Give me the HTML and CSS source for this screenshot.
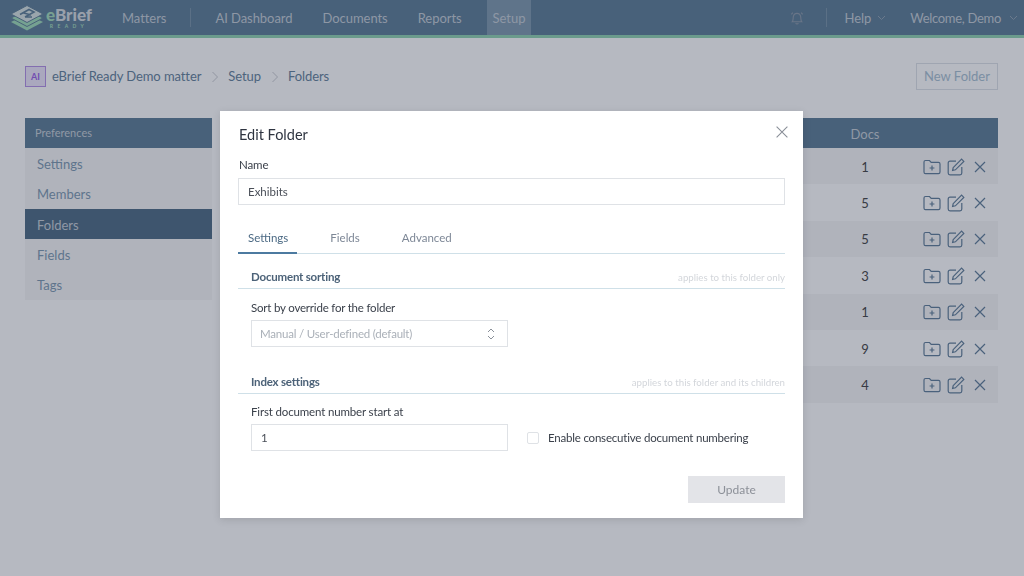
FILE: index.html
```html
<!DOCTYPE html>
<html lang="en">
<head>
  <meta charset="UTF-8">
  <title>Edit Folder</title>
  <link rel="stylesheet" href="styles.css">
</head>
<body>

<header class="topbar">
  <div class="logo">
    <svg width="34" height="26" viewBox="0 0 34 26">
      <path d="M1 17 L17 9 L33 17 L17 25.5 Z" fill="#9fdcb8"/>
      <path d="M1 13 L17 5 L33 13 L17 21.5 Z" fill="#9fdcb8" stroke="#5c7c95" stroke-width="1"/>
      <path d="M1 9 L17 .5 L33 9 L17 17.5 Z" fill="#d5e2e0" stroke="#5c7c95" stroke-width="1"/>
      <path d="M10 9.5 L19 4.5 L24 7 L15 12 M13 7.8 L21 10 M15 12 L22 12" stroke="#5c7c95" stroke-width="1.6" fill="none"/>
    </svg>
    <div class="logo-text">
      <div class="logo-name"><span class="logo-e">e</span>Brief</div>
      <div class="logo-ready">READY</div>
    </div>
  </div>
  <nav class="nav">
    <a class="nav-link">Matters</a>
    <span class="nav-sep"></span>
    <a class="nav-link">AI Dashboard</a>
    <a class="nav-link">Documents</a>
    <a class="nav-link">Reports</a>
    <a class="nav-link nav-active">Setup</a>
  </nav>
  <div class="nav-right">
    <svg class="bell" width="16" height="16" viewBox="0 0 16 16" fill="none" stroke="#8c9aaa" stroke-width="1.1">
      <path d="M3.2 11.8 C4.4 10.4 4 8.6 4.3 6.8 C4.6 4.8 6 3.4 8 3.4 C10 3.4 11.4 4.8 11.7 6.8 C12 8.6 11.6 10.4 12.8 11.8 Z"/>
      <path d="M6.6 13.2 C7.2 14.2 8.8 14.2 9.4 13.2"/>
      <path d="M2.4 4.4 L3.8 2.6 M13.6 4.4 L12.2 2.6"/>
    </svg>
    <span class="nav-sep"></span>
    <a class="nav-link nav-drop">Help <svg class="chev" width="9" height="6" viewBox="0 0 9 6"><path d="M1 1 L4.5 4.5 L8 1" fill="none" stroke="#8fa1b2" stroke-width="1"/></svg></a>
    <a class="nav-link nav-drop nav-user">Welcome, Demo <svg class="chev" width="9" height="6" viewBox="0 0 9 6"><path d="M1 1 L4.5 4.5 L8 1" fill="none" stroke="#8fa1b2" stroke-width="1"/></svg></a>
  </div>
</header>

<main class="page">
  <div class="crumbs">
    <span class="matter-badge">AI</span>
    <span class="crumb">eBrief Ready Demo matter</span>
    <svg class="crumb-sep" width="8" height="12" viewBox="0 0 8 12"><path d="M1.5 1 L6.5 6 L1.5 11" fill="none" stroke="#c9ccd2" stroke-width="1"/></svg>
    <span class="crumb">Setup</span>
    <svg class="crumb-sep" width="8" height="12" viewBox="0 0 8 12"><path d="M1.5 1 L6.5 6 L1.5 11" fill="none" stroke="#c9ccd2" stroke-width="1"/></svg>
    <span class="crumb">Folders</span>
    <button class="btn-new">New Folder</button>
  </div>

  <div class="columns">
    <aside class="side">
      <div class="side-head">Preferences</div>
      <a class="side-item">Settings</a>
      <a class="side-item">Members</a>
      <a class="side-item side-active">Folders</a>
      <a class="side-item">Fields</a>
      <a class="side-item">Tags</a>
    </aside>

    <section class="table">
      <div class="row row-head"><span class="docs">Docs</span><span class="acts"></span></div>
      <div class="row"><span class="docs">1</span><span class="acts" data-acts></span></div>
      <div class="row"><span class="docs">5</span><span class="acts" data-acts></span></div>
      <div class="row"><span class="docs">5</span><span class="acts" data-acts></span></div>
      <div class="row"><span class="docs">3</span><span class="acts" data-acts></span></div>
      <div class="row"><span class="docs">1</span><span class="acts" data-acts></span></div>
      <div class="row"><span class="docs">9</span><span class="acts" data-acts></span></div>
      <div class="row"><span class="docs">4</span><span class="acts" data-acts></span></div>
    </section>
  </div>
</main>

<template id="actIcons">
  <svg width="18" height="16" viewBox="0 0 18 16" fill="none" stroke="#5f7d98" stroke-width="1.2">
    <path d="M1 3 C1 2 1.5 1.5 2.5 1.5 H6.5 L8.2 3.4 H15.5 C16.5 3.4 17 4 17 5 V13 C17 14 16.5 14.6 15.5 14.6 H2.5 C1.5 14.6 1 14 1 13 Z"/>
    <path d="M9 6.6 V11.4 M6.6 9 H11.4"/>
  </svg>
  <svg width="18" height="18" viewBox="0 0 18 18" fill="none" stroke="#5f7d98" stroke-width="1.2">
    <path d="M9 3.2 H3 C2 3.2 1.2 4 1.2 5 V15 C1.2 16 2 16.8 3 16.8 H13 C14 16.8 14.8 16 14.8 15 V9"/>
    <path d="M6.2 9.6 L14.6 1.2 L16.8 3.4 L8.4 11.8 L5.6 12.4 Z"/>
  </svg>
  <svg class="act-x" width="12" height="12" viewBox="0 0 12 12" fill="none" stroke="#5f7d98" stroke-width="1.2">
    <path d="M1 1 L11 11 M11 1 L1 11"/>
  </svg>
</template>

<div class="overlay">
  <div class="modal">
    <svg class="modal-close" width="12" height="12" viewBox="0 0 12 12" fill="none" stroke="#8a8f98" stroke-width="1.1">
      <path d="M.6 .6 L11.4 11.4 M11.4 .6 L.6 11.4"/>
    </svg>
    <h2 class="modal-title">Edit Folder</h2>
    <label class="label">Name</label>
    <div class="input input-name">Exhibits</div>

    <div class="tabs">
      <span class="tab tab-active">Settings</span>
      <span class="tab">Fields</span>
      <span class="tab">Advanced</span>
    </div>

    <div class="group">
      <div class="group-head"><span class="group-title">Document sorting</span><span class="group-note">applies to this folder only</span></div>
      <label class="label label-inner">Sort by override for the folder</label>
      <div class="input input-half input-select">
        Manual / User-defined (default)
        <svg width="8" height="12" viewBox="0 0 8 12" fill="none" stroke="#8a9099" stroke-width="1"><path d="M1 4 L4 1 L7 4 M1 8 L4 11 L7 8"/></svg>
      </div>
    </div>

    <div class="group group-second">
      <div class="group-head"><span class="group-title">Index settings</span><span class="group-note">applies to this folder and its children</span></div>
      <label class="label label-first">First document number start at</label>
      <div class="field-row">
        <div class="input input-half">1</div>
        <label class="check"><span class="check-box"></span>Enable consecutive document numbering</label>
      </div>
    </div>

    <div class="modal-foot"><button class="btn-update">Update</button></div>
  </div>
</div>

<script>
  const tpl = document.getElementById("actIcons");
  document.querySelectorAll("[data-acts]").forEach(el => {
    el.appendChild(tpl.content.cloneNode(true));
  });
</script>

</body>
</html>
```

FILE: styles.css
```css
* {
  box-sizing: border-box;
}
body {
  margin: 0;
  height: 576px;
  overflow: hidden;
  background-color: #fff;
  font-family: 'Lato', 'Noto Sans', sans-serif;
  font-size: 13px;
  color: #333;
}

/* top bar */
.topbar {
  display: flex;
  align-items: center;
  height: 38px;
  background-color: #5c7c95;
  border-bottom: 3px solid #90d3b1;
}
.logo {
  display: flex;
  align-items: center;
  gap: 2px;
  width: 122px;
  padding-left: 10px;
  flex: none;
}
.logo-text {
  line-height: 1;
}
.logo-name {
  font-size: 17px;
  font-weight: 900;
  color: #d3dadf;
}
.logo-e {
  color: #a3dcba;
}
.logo-ready {
  font-size: 5px;
  font-weight: 700;
  letter-spacing: 4.4px;
  color: #a3dcba;
  text-align: center;
  margin-top: 1px;
}
.nav {
  display: flex;
  align-items: center;
  height: 35px;
}
.nav-link {
  display: flex;
  align-items: center;
  height: 35px;
  margin-right: 30px;
  font-size: 13px;
  letter-spacing: -0.05px;
  color: #c3ccd5;
  white-space: nowrap;
}
.nav-sep {
  width: 1px;
  height: 19px;
  background-color: #7892a8;
  margin: 0 24px 0 -6px;
}
.nav-active {
  margin: 0 0 0 -5px;
  padding: 0 6px;
  background-color: #7e99ae;
}
.nav-right {
  display: flex;
  align-items: center;
  margin-left: auto;
  height: 35px;
}
.bell {
  margin-right: 21px;
}
.nav-right .nav-sep {
  margin: 0 17px 0 0;
}
.nav-drop {
  gap: 6px;
  margin-right: 24px;
}
.nav-user {
  margin-right: 6px;
  gap: 8px;
  letter-spacing: -0.3px;
}

/* page under the dialog */
.page {
  padding: 25px 26px 0 25px;
}
.crumbs {
  display: flex;
  align-items: center;
  height: 27px;
}
.matter-badge {
  display: flex;
  align-items: center;
  justify-content: center;
  width: 21px;
  height: 21px;
  margin-right: 6px;
  border: 1px solid #b490e6;
  background-color: #ede6fb;
  color: #9a5fe8;
  font-size: 9px;
  font-weight: 700;
}
.crumb {
  margin-bottom: 2px;
  font-size: 13px;
  letter-spacing: -0.08px;
  color: #63809a;
}
.crumb-sep {
  margin: 0 9px 0 10px;
}
.btn-new {
  margin-left: auto;
  width: 82px;
  height: 27px;
  padding: 0 0 2px;
  border: 1px solid #dde2e8;
  background: transparent;
  color: #a8c0d2;
  font-family: inherit;
  font-size: 13px;
}
.columns {
  display: flex;
  align-items: flex-start;
  gap: 18px;
  margin-top: 28px;
}
.side {
  width: 187px;
  flex: none;
  padding-bottom: 1px;
  background-color: #f6f6f7;
}
.side-head {
  height: 30px;
  line-height: 30px;
  padding-left: 10px;
  background-color: #5c7c95;
  color: #c6ced6;
  font-size: 11px;
}
.side-item {
  display: block;
  height: 30.3px;
  line-height: 32px;
  padding-left: 12px;
  color: #7d99b1;
  font-size: 13px;
}
.side-active {
  background-color: #4c6a84;
  color: #c6ced6;
}
.table {
  flex: 1;
}
.row {
  display: flex;
  align-items: center;
  justify-content: flex-end;
  height: 36.4px;
  padding-top: 1px;
  color: #444;
  font-size: 13px;
}
.row:nth-child(even) {
  background-color: #f6f6f7;
}
.row-head {
  height: 30px;
  background-color: #5c7c95;
  color: #c6ced6;
  font-size: 13px;
}
.docs {
  width: 60px;
  text-align: center;
}
.acts {
  display: flex;
  align-items: center;
  gap: 6px;
  width: 103px;
  padding-left: 28px;
}
.act-x {
  margin-left: 3px;
}

/* dialog */
.overlay {
  position: fixed;
  inset: 0;
  display: flex;
  justify-content: center;
  align-items: flex-start;
  padding-top: 111px;
  background-color: rgba(32, 42, 68, 0.33);
}
.modal {
  position: relative;
  width: 583px;
  height: 407px;
  margin-left: -1px;
  padding: 14px 18px 15px;
  background-color: #fff;
  box-shadow: 0 2px 8px rgba(0, 0, 0, 0.12);
}
.modal-close {
  position: absolute;
  top: 15px;
  right: 15px;
}
.modal-title {
  margin: 0 0 12px 1px;
  font-size: 14.5px;
  line-height: 20px;
  font-weight: 400;
  color: #2e3440;
}
.label {
  display: block;
  margin-left: 1px;
  font-size: 11.5px;
  line-height: 16px;
  letter-spacing: -0.1px;
  color: #3b414b;
}
.input {
  display: flex;
  align-items: center;
  height: 27px;
  padding: 0 9px;
  border: 1px solid #dfe2e6;
  font-size: 11.5px;
  color: #4a4f58;
}
.input-name {
  margin-top: 5px;
}
.tabs {
  display: flex;
  margin-top: 21px;
  height: 28px;
  border-bottom: 1px solid #cfe0e8;
}
.tab {
  padding: 0 9px;
  margin-right: 24px;
  line-height: 24px;
  font-size: 11.5px;
  color: #7d8796;
}
.tab-active {
  height: 28px;
  padding: 0 9px 0 10px;
  margin-right: 24px;
  color: #4c6a84;
  border-bottom: 2px solid #4c7aa0;
}
.group {
  margin-top: 14px;
}
.group-head {
  display: flex;
  align-items: baseline;
  justify-content: space-between;
  height: 21px;
  padding-left: 13px;
  border-bottom: 1px solid #cfe0e8;
}
.group-title {
  font-size: 11.5px;
  font-weight: 700;
  line-height: 18px;
  letter-spacing: -0.2px;
  color: #4c6278;
}
.group-note {
  font-size: 9.7px;
  color: #d3d6db;
}
.label-inner {
  margin: 11px 0 4px 13px;
  letter-spacing: -0.2px;
}
.label-first {
  margin: 10px 0 4px 13px;
  letter-spacing: -0.15px;
}
.input-half {
  width: 257px;
  margin-left: 13px;
}
.input-select {
  justify-content: space-between;
  padding: 0 12px 0 8px;
  letter-spacing: -0.2px;
  color: #aab0b8;
}
.group-second {
  margin-top: 26px;
}
.field-row {
  display: flex;
  align-items: center;
}
.check {
  display: flex;
  align-items: center;
  gap: 9px;
  margin-left: 19px;
  font-size: 11.5px;
  letter-spacing: -0.2px;
  color: #3b414b;
}
.check-box {
  width: 12px;
  height: 12px;
  border: 1px solid #dfe2e6;
  border-radius: 2px;
}
.modal-foot {
  display: flex;
  justify-content: flex-end;
  margin-top: 25px;
}
.btn-update {
  width: 97px;
  height: 27px;
  padding: 0;
  border: 1px solid #e3e4e8;
  background-color: #e3e4e8;
  color: #8c9098;
  font-family: inherit;
  font-size: 12px;
}
```
